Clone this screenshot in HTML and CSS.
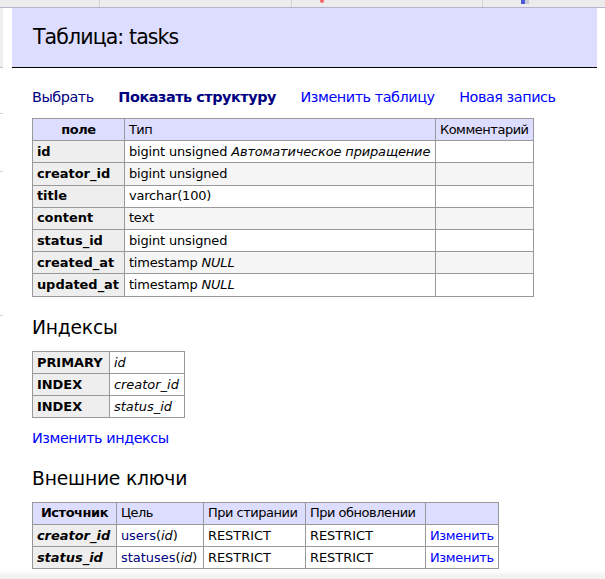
FILE: index.html
```html
<!DOCTYPE html>
<html lang="ru">
<head>
<meta charset="utf-8">
<title>Таблица: tasks</title>
<link rel="stylesheet" href="styles.css">
</head>
<body>
<div class="tabs">
  <div class="tab tab1"></div>
  <div class="tab tab2"></div>
  <div class="tab tab3"><span class="ico ico-red"></span></div>
  <div class="tab tab4"><span class="ico ico-blue"></span></div>
</div>
<div class="page">
  <aside class="menu">
    <div class="menu-head"></div>
    <div class="menu-line ml1"></div>
    <div class="menu-line ml2"></div>
    <div class="menu-line ml3"></div>
  </aside>
  <main class="content">
    <h2>Таблица: tasks</h2>
    <p class="links"><a class="visited" href="#">Выбрать</a> <a class="visited active" href="#">Показать структуру</a> <a href="#">Изменить таблицу</a> <a href="#">Новая запись</a></p>

    <table class="odds t-fields">
      <thead>
        <tr><th class="w-field">поле</th><td class="w-type">Тип</td><td class="w-comment">Комментарий</td></tr>
      </thead>
      <tbody>
        <tr><th>id</th><td>bigint unsigned <i>Автоматическое приращение</i></td><td></td></tr>
        <tr><th>creator_id</th><td>bigint unsigned</td><td></td></tr>
        <tr><th>title</th><td>varchar(100)</td><td></td></tr>
        <tr><th>content</th><td>text</td><td></td></tr>
        <tr><th>status_id</th><td>bigint unsigned</td><td></td></tr>
        <tr><th>created_at</th><td>timestamp <i>NULL</i></td><td></td></tr>
        <tr><th>updated_at</th><td>timestamp <i>NULL</i></td><td></td></tr>
      </tbody>
    </table>

    <h3>Индексы</h3>
    <table class="t-indexes">
      <tbody>
        <tr><th class="w-ikind">PRIMARY</th><td class="w-icol"><i>id</i></td></tr>
        <tr><th>INDEX</th><td><i>creator_id</i></td></tr>
        <tr><th>INDEX</th><td><i>status_id</i></td></tr>
      </tbody>
    </table>
    <p class="links links-after"><a href="#">Изменить индексы</a></p>

    <h3 class="h3-fk">Внешние ключи</h3>
    <table class="t-fk">
      <thead>
        <tr><th class="w-src">Источник</th><td class="w-target">Цель</td><td class="w-del">При стирании</td><td class="w-upd">При обновлении</td><td class="w-edit"></td></tr>
      </thead>
      <tbody>
        <tr><th><i>creator_id</i></th><td><a class="visited" href="#">users</a>(<i>id</i>)</td><td>RESTRICT</td><td>RESTRICT</td><td><a class="edit" href="#">Изменить</a></td></tr>
        <tr><th><i>status_id</i></th><td><a class="visited" href="#">statuses</a>(<i>id</i>)</td><td>RESTRICT</td><td>RESTRICT</td><td><a class="edit" href="#">Изменить</a></td></tr>
      </tbody>
    </table>
  </main>
</div>
<div class="shade"></div>
</body>
</html>
```

FILE: styles.css
```css
* { box-sizing: border-box; }
html, body { margin: 0; background: #fff; }
body {
  font: 14.4px/18px "DejaVu Sans", Verdana, sans-serif;
  color: #000;
}
a { color: #0000ff; text-decoration: none; }
a.visited { color: #000080; }
a.active { font-weight: bold; }

.tabs {
  display: flex;
  height: 8px;
  background: #ececec;
  border-bottom: 1px solid #b4b4cc;
}
.tab { border-right: 1px solid #d2d2d2; display: flex; align-items: flex-start; flex-shrink: 0; }
.tab1 { width: 100px; }
.tab2 { width: 192px; }
.tab3 { width: 191px; padding-left: 28px; }
.tab4 { flex: 1; border-right: 0; padding-left: 38px; }
.ico { display: block; width: 4px; height: 3px; }
.ico-red { background: #f26a6a; border-radius: 0 0 2px 2px; }
.ico-blue { background: linear-gradient(90deg, #4a5bd6 50%, #c8c8d8 50%); width: 8px; height: 4px; }

.page { display: flex; }
.menu { width: 3px; flex-shrink: 0; margin-right: 9px; display: flex; flex-direction: column; }
.menu-head { height: 60px; background: #efefef; border-bottom: 1px solid #c4c4c4; }
.menu-line { border-top: 1px solid #d0d0d0; }
.ml1 { margin-top: 45px; }
.ml2 { margin-top: 57px; }
.ml3 { margin-top: 143px; }

.content { flex: 1; min-width: 0; padding: 0 8px 0 20px; }

h2 {
  font-size: 20.5px;
  letter-spacing: -0.9px;
  line-height: 27px;
  font-weight: normal;
  margin: 0 0 20px -20px;
  padding: 16px 21px;
  border-bottom: 1px solid #000;
  background: #ddf;
}
h3 {
  font-size: 18.72px;
  letter-spacing: -0.2px;
  line-height: 23.4px;
  font-weight: normal;
  margin: 19px 0 0;
}
.h3-fk { margin-top: 20px; }

.links { margin: 0; white-space: nowrap; }
.links a { margin-right: 20px; letter-spacing: -0.45px; }
.links-after { margin-top: 11px; }

table {
  border-spacing: 0;
  border-top: 1px solid #999;
  border-left: 1px solid #999;
  font-size: 12.96px;
  line-height: 16px;
  margin-top: 12px;
}
td, th {
  padding: 2.6px 3.9px;
  border-right: 1px solid #999;
  border-bottom: 1px solid #999;
  white-space: nowrap;
  vertical-align: middle;
}
th { background: #eee; text-align: left; }
thead th { text-align: center; padding: 2.6px 6.5px; }
thead th, thead td { background: #ddf; letter-spacing: -0.45px; }
.odds tbody tr:nth-child(2n) td { background: #f5f5f5; }
.t-fields tbody td { letter-spacing: -0.14px; }
.t-fk { margin-top: 11px; }
.edit { letter-spacing: -0.3px; }

.w-field { width: 92px; }
.w-type { width: 311px; }
.w-comment { width: 98px; }
.w-ikind { width: 77px; }
.w-icol { width: 75px; }
.w-src { width: 84px; }
.w-target { width: 87px; }
.w-del { width: 102px; }
.w-upd { width: 120px; }
.w-edit { width: 73px; }

.shade {
  position: fixed;
  left: 0;
  right: 0;
  bottom: 0;
  height: 9px;
  background: linear-gradient(rgba(240, 240, 240, 0), #f2f2f2 70%);
}
```
